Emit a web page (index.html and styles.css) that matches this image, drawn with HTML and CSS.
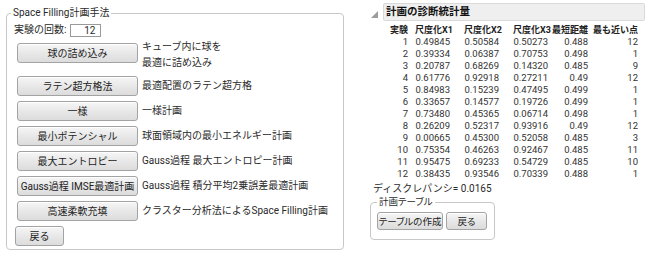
FILE: index.html
```html
<!DOCTYPE html>
<html lang="ja">
<head>
<meta charset="utf-8">
<title>Space Filling計画</title>
<link rel="stylesheet" href="styles.css">
</head>
<body>
<div class="page">
  <fieldset class="methods">
    <legend class="legend">Space Filling計画手法</legend>
    <div class="runs">
      <span>実験の回数:</span>
      <span class="num-input">12</span>
    </div>
    <div class="method method-tall">
      <button class="btn wide">球の詰め込み</button>
      <span class="desc desc-two">キューブ内に球を<br>最適に詰め込み</span>
    </div>
    <div class="method">
      <button class="btn wide">ラテン超方格法</button>
      <span class="desc">最適配置のラテン超方格</span>
    </div>
    <div class="method">
      <button class="btn wide">一様</button>
      <span class="desc">一様計画</span>
    </div>
    <div class="method">
      <button class="btn wide">最小ポテンシャル</button>
      <span class="desc">球面領域内の最小エネルギー計画</span>
    </div>
    <div class="method">
      <button class="btn wide">最大エントロピー</button>
      <span class="desc">Gauss過程 最大エントロピー計画</span>
    </div>
    <div class="method">
      <button class="btn wide">Gauss過程 IMSE最適計画</button>
      <span class="desc">Gauss過程 積分平均2乗誤差最適計画</span>
    </div>
    <div class="method">
      <button class="btn wide">高速柔軟充填</button>
      <span class="desc">クラスター分析法によるSpace Filling計画</span>
    </div>
    <div class="method">
      <button class="btn back">戻る</button>
    </div>
  </fieldset>

  <section class="diag">
    <div class="diag-head">
      <svg class="disclosure" width="7" height="7" viewBox="0 0 7 7"><polygon points="7,0 7,7 0,7" fill="#9c9c9c"/></svg>
      <div class="diag-title">計画の診断統計量</div>
    </div>
    <table class="stats">
      <colgroup>
        <col class="c1"><col class="c2"><col class="c3"><col class="c4"><col class="c5"><col class="c6">
      </colgroup>
      <thead>
        <tr><th>実験</th><th>尺度化X1</th><th>尺度化X2</th><th>尺度化X3</th><th>最短距離</th><th>最も近い点</th></tr>
      </thead>
      <tbody>
        <tr><td>1</td><td class="x">0.49845</td><td class="x">0.50584</td><td class="x">0.50273</td><td>0.488</td><td>12</td></tr>
        <tr><td>2</td><td class="x">0.39334</td><td class="x">0.06387</td><td class="x">0.70753</td><td>0.498</td><td>1</td></tr>
        <tr><td>3</td><td class="x">0.20787</td><td class="x">0.68269</td><td class="x">0.14320</td><td>0.485</td><td>9</td></tr>
        <tr><td>4</td><td class="x">0.61776</td><td class="x">0.92918</td><td class="x">0.27211</td><td>0.49</td><td>12</td></tr>
        <tr><td>5</td><td class="x">0.84983</td><td class="x">0.15239</td><td class="x">0.47495</td><td>0.499</td><td>1</td></tr>
        <tr><td>6</td><td class="x">0.33657</td><td class="x">0.14577</td><td class="x">0.19726</td><td>0.499</td><td>1</td></tr>
        <tr><td>7</td><td class="x">0.73480</td><td class="x">0.45365</td><td class="x">0.06714</td><td>0.498</td><td>1</td></tr>
        <tr><td>8</td><td class="x">0.26209</td><td class="x">0.52317</td><td class="x">0.93916</td><td>0.49</td><td>12</td></tr>
        <tr><td>9</td><td class="x">0.00665</td><td class="x">0.45300</td><td class="x">0.52058</td><td>0.485</td><td>3</td></tr>
        <tr><td>10</td><td class="x">0.75354</td><td class="x">0.46263</td><td class="x">0.92467</td><td>0.485</td><td>11</td></tr>
        <tr><td>11</td><td class="x">0.95475</td><td class="x">0.69233</td><td class="x">0.54729</td><td>0.485</td><td>10</td></tr>
        <tr><td>12</td><td class="x">0.38435</td><td class="x">0.93546</td><td class="x">0.70339</td><td>0.488</td><td>1</td></tr>
      </tbody>
    </table>
    <div class="discrepancy">ディスクレパンシ= 0.0165</div>
    <fieldset class="table-box">
      <legend class="legend">計画テーブル</legend>
      <div class="table-actions">
        <button class="btn small make">テーブルの作成</button>
        <button class="btn small back2">戻る</button>
      </div>
    </fieldset>
  </section>
</div>
</body>
</html>
```

FILE: styles.css
```css
html, body {
  margin: 0;
  padding: 0;
  background: #ffffff;
}

body {
  font-family: Roboto, "Noto Sans CJK JP", sans-serif;
  font-size: 10px;
  line-height: 14px;
  color: #2a2a2a;
}

.page {
  display: flex;
  align-items: flex-start;
  width: 645px;
  height: 261px;
  overflow: hidden;
}

/* ---------- left panel ---------- */
.methods {
  box-sizing: border-box;
  width: 338px;
  height: 244px;
  margin: 6px 0 0 6px;
  padding: 2px 7px 9px 7px;
  border: 1px solid #c8c8c8;
  border-radius: 4px;
  display: flex;
  flex-direction: column;
  gap: 5px;
  min-width: 0;
}

.legend {
  padding: 0 2px;
  margin-left: -3px;
  line-height: 14px;
  color: #2a2a2a;
}

.runs {
  display: flex;
  align-items: center;
  gap: 4px;
  height: 14px;
  margin-top: 1px;
}

.num-input {
  box-sizing: border-box;
  width: 31px;
  height: 13px;
  border: 1px solid #9a9a9a;
  background: #ffffff;
  text-align: right;
  padding-right: 5px;
  line-height: 11px;
  font-size: 10px;
}

.method {
  display: flex;
  align-items: center;
  gap: 4px;
  height: 20px;
}

.method-tall {
  align-items: flex-start;
  height: 29px;
}

.btn {
  box-sizing: border-box;
  font: inherit;
  color: #222222;
  height: 20px;
  padding: 0;
  border: 1px solid #a3a3a3;
  border-radius: 3px;
  background: linear-gradient(#f6f6f6, #e8e8e8 50%, #dcdcdc);
  box-shadow: inset 0 1px 0 #ffffff;
  text-align: center;
  line-height: 17px;
  white-space: nowrap;
}

.btn.wide {
  width: 121px;
  margin-left: 3px;
}

.method-tall .btn {
  margin-top: 1px;
}

.btn.back {
  width: 49px;
  margin-left: 1px;
}

.desc {
  white-space: nowrap;
}

.desc-two {
  line-height: 16px;
  margin-top: -3px;
}

/* ---------- right panel ---------- */
.diag {
  margin-left: 22px;
  width: 279px;
  display: flex;
  flex-direction: column;
}

.diag-head {
  display: flex;
  align-items: center;
  margin-top: 3px;
  height: 18px;
}

.disclosure {
  margin: 5px 5px 0 5px;
  flex: none;
}

.diag-title {
  box-sizing: border-box;
  flex: 1;
  height: 18px;
  background: #efefef;
  border: 1px solid #d9d9d9;
  border-radius: 2px;
  padding-left: 2px;
  font-weight: bold;
  font-size: 10.5px;
  line-height: 16px;
  color: #111111;
}

.stats {
  border-collapse: collapse;
  margin: 3px 0 0 18px;
  table-layout: fixed;
  width: 254px;
}

.c1 { width: 24px; }
.c2 { width: 45px; }
.c3 { width: 49px; }
.c4 { width: 49px; }
.c5 { width: 37px; }
.c6 { width: 50px; }

.stats th,
.stats td {
  padding: 0;
  text-align: right;
  white-space: nowrap;
  height: 12px;
  line-height: 12px;
}

.stats th {
  font-weight: bold;
  font-size: 9px;
  color: #222222;
}

.stats td {
  font-size: 9.5px;
  color: #333333;
}

.stats td.x {
  padding-right: 3px;
}

.discrepancy {
  margin: 2px 0 0 7px;
  line-height: 14px;
}

.table-box {
  box-sizing: border-box;
  width: 125px;
  margin: 0 0 0 4px;
  padding: 4px 6px 9px 6px;
  border: 1px solid #c8c8c8;
  border-radius: 4px;
  min-width: 0;
  font-size: 9.5px;
  font-feature-settings: "palt";
}

.table-box .legend {
  margin-left: 0;
  line-height: 12px;
}

.table-actions {
  display: flex;
  gap: 3px;
}

.btn.small {
  height: 18px;
  line-height: 15px;
  font-feature-settings: "palt";
}

.btn.make {
  width: 66px;
}

.btn.back2 {
  width: 41px;
}
```
